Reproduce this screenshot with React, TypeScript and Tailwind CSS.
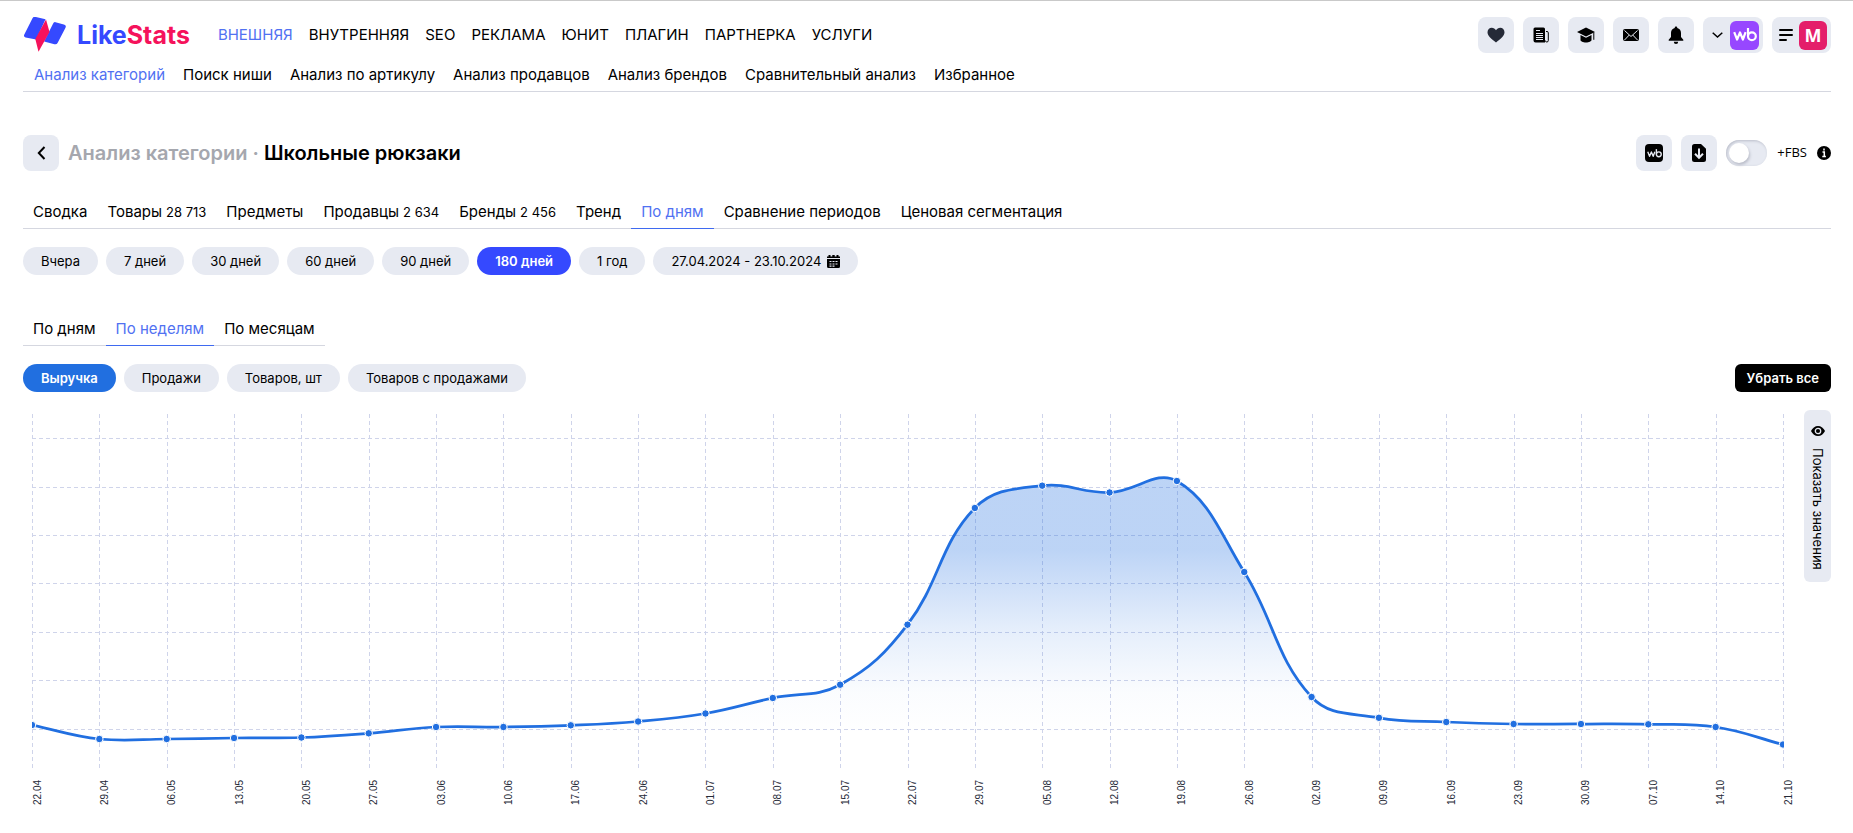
import { useId, useState } from "react";
import type { ReactNode } from "react";

const MAIN_NAV = [
  "ВНЕШНЯЯ",
  "ВНУТРЕННЯЯ",
  "SEO",
  "РЕКЛАМА",
  "ЮНИТ",
  "ПЛАГИН",
  "ПАРТНЕРКА",
  "УСЛУГИ",
];

const SUB_NAV = [
  "Анализ категорий",
  "Поиск ниши",
  "Анализ по артикулу",
  "Анализ продавцов",
  "Анализ брендов",
  "Сравнительный анализ",
  "Избранное",
];

const TABS: { label: string; count?: string }[] = [
  { label: "Сводка" },
  { label: "Товары", count: "28 713" },
  { label: "Предметы" },
  { label: "Продавцы", count: "2 634" },
  { label: "Бренды", count: "2 456" },
  { label: "Тренд" },
  { label: "По дням" },
  { label: "Сравнение периодов" },
  { label: "Ценовая сегментация" },
];

const PERIODS = ["Вчера", "7 дней", "30 дней", "60 дней", "90 дней", "180 дней", "1 год"];
const GROUPING = ["По дням", "По неделям", "По месяцам"];
const METRICS = ["Выручка", "Продажи", "Товаров, шт", "Товаров с продажами"];

// [week start, y inside the 357px plot]
const WEEKS: [string, number][] = [
  ["22.04", 311],
  ["29.04", 325],
  ["06.05", 325],
  ["13.05", 324],
  ["20.05", 323.5],
  ["27.05", 319.3],
  ["03.06", 313],
  ["10.06", 313],
  ["17.06", 311.3],
  ["24.06", 307.5],
  ["01.07", 299.5],
  ["08.07", 284],
  ["15.07", 270.7],
  ["22.07", 210.7],
  ["29.07", 94],
  ["05.08", 71.7],
  ["12.08", 78.5],
  ["19.08", 67],
  ["26.08", 158],
  ["02.09", 283],
  ["09.09", 303.8],
  ["16.09", 308],
  ["23.09", 310],
  ["30.09", 310],
  ["07.10", 310.3],
  ["14.10", 313],
  ["21.10", 330.5],
];

const PLOT_W = 1752;
const PLOT_H = 357;
const TENSION = 0.4;
const GRID_ROWS = [24, 73, 121, 169, 218, 266, 315];

const POINTS = WEEKS.map(([, y], i) => ({ x: (i * (PLOT_W - 1)) / (WEEKS.length - 1), y }));

function buildLine() {
  const controls = POINTS.map((p, i) => {
    const prev = POINTS[i - 1] ?? p;
    const next = POINTS[i + 1] ?? p;
    const d01 = Math.hypot(p.x - prev.x, p.y - prev.y);
    const d12 = Math.hypot(next.x - p.x, next.y - p.y);
    const fa = (TENSION * d01) / (d01 + d12);
    const fb = (TENSION * d12) / (d01 + d12);
    return {
      inX: p.x - fa * (next.x - prev.x),
      inY: p.y - fa * (next.y - prev.y),
      outX: p.x + fb * (next.x - prev.x),
      outY: p.y + fb * (next.y - prev.y),
    };
  });
  return POINTS.map((p, i) => {
    if (i === 0) return `M${p.x} ${p.y}`;
    const a = controls[i - 1];
    const b = controls[i];
    return `C${a.outX} ${a.outY} ${b.inX} ${b.inY} ${p.x} ${p.y}`;
  }).join(" ");
}

const LINE = buildLine();

function Logo() {
  return (
    <a href="#" className="flex items-center gap-2.5">
      <svg width="44" height="36" viewBox="0 1 44 36" aria-hidden="true">
        <path d="M12 .8 22.500 3.200 13.200 23.600 2.600 21.500Q.2 20.800 1.300 18.500L9.500 2.300Q10.400.5 12 .8Z" fill="#3549ff" />
        <path d="m32.500 6.200 8.300 2.400q2.900.7 1.700 3.200l-7.800 14.900q-1 2.100-3.300 1.500l-10.300-2.800 8.800-17.300q.9-2.400 2.600-1.900Z" fill="#3549ff" />
        <path d="m23 3.500 3.500 12.500L15.500 35.800 12.300 23Z" fill="#f5125b" />
      </svg>
      <span className="text-[25px] leading-8 font-bold">
        <span className="text-[#3549ff]">Like</span>
        <span className="text-[#f5125b]">Stats</span>
      </span>
    </a>
  );
}

function IconButton({ label, children }: { label: string; children: ReactNode }) {
  return (
    <button
      type="button"
      aria-label={label}
      className="flex size-9 shrink-0 items-center justify-center rounded-lg bg-[#e7eaf2]"
    >
      {children}
    </button>
  );
}

function WbMark({ className }: { className: string }) {
  return (
    <svg viewBox="0 0 24 14" fill="none" stroke="currentColor" strokeWidth="2.200" className={className} aria-hidden="true">
      <path d="m1.200 4.200 2.900 7.300L7 4.500l2.900 7 2.700-7.300" strokeLinejoin="round" />
      <path d="M15 0v8.300" />
      <circle cx="18.900" cy="8.300" r="3.900" />
    </svg>
  );
}

function UnderlineTabs({
  items,
  active,
  onSelect,
}: {
  items: { label: string; count?: string }[];
  active: string;
  onSelect: (label: string) => void;
}) {
  return (
    <div role="tablist" className="flex border-b border-[#d5d7e0]">
      {items.map((item) => (
        <button
          key={item.label}
          type="button"
          role="tab"
          aria-selected={item.label === active}
          onClick={() => onSelect(item.label)}
          className={[
            "-mb-px flex h-8 items-center gap-1 border-b px-2.5 pb-0.5 text-[15px] leading-5",
            item.label === active ? "border-[#3f6af0] text-[#5171f2]" : "border-transparent",
          ].join(" ")}
        >
          {item.label}
          {item.count ? <span className="text-[13px]">{item.count}</span> : null}
        </button>
      ))}
    </div>
  );
}

function Chip({
  active = false,
  activeClass = "bg-[#3549ff]",
  onClick,
  children,
}: {
  active?: boolean;
  activeClass?: string;
  onClick?: () => void;
  children: ReactNode;
}) {
  return (
    <button
      type="button"
      aria-pressed={active}
      onClick={onClick}
      className={[
        "flex items-center gap-1.5 rounded-full px-[18px] py-1 text-[13px] leading-5",
        active ? `${activeClass} font-semibold text-white` : "bg-[#e7eaf2]",
      ].join(" ")}
    >
      {children}
    </button>
  );
}

function Header() {
  return (
    <header className="border-b border-[#d5d7e0]">
      <div className="flex items-center justify-between pt-4">
        <div className="flex items-center gap-7">
          <Logo />
          <nav aria-label="Разделы" className="flex gap-4 text-[15px] leading-5">
            {MAIN_NAV.map((label, i) => (
              <a key={label} href="#" className={i === 0 ? "text-[#5171f2]" : ""}>
                {label}
              </a>
            ))}
          </nav>
        </div>

        <div className="flex gap-[9px]">
          <IconButton label="Избранное">
            <svg width="18" height="16" viewBox="0 0 18 16" fill="#252a37">
              <path d="M9 15.500C4 11.800.5 8.800.5 5.300.5 2.500 2.400.7 4.700.7 6.600.7 8 1.700 9 3.200 10 1.700 11.400.7 13.300.7c2.300 0 4.200 1.800 4.200 4.600 0 3.500-3.500 6.500-8.500 10.200Z" />
            </svg>
          </IconButton>
          <IconButton label="Новости">
            <svg width="16" height="16" viewBox="0 0 16 16">
              <path d="M2 .5h8.500a1.500 1.500 0 0 1 1.500 1.500v13.500H2.500a2 2 0 0 1-2-2V2A1.500 1.500 0 0 1 2 .5Z" />
              <path d="M13 4.500h1a1.300 1.300 0 0 1 1.300 1.300v7.700a1.500 1.500 0 0 1-3 0" fill="none" stroke="#000" />
              <path d="M3 3.500h4M3 6.500h7M3 8.500h7M3 10.500h7M3 12.500h7" stroke="#e7eaf2" />
            </svg>
          </IconButton>
          <IconButton label="Обучение">
            <svg width="18" height="16" viewBox="0 0 18 16">
              <path d="M9 .5 0 5l9 4.500L18 5Z" />
              <path d="M3.500 8v5c0 1.300 2.500 2.500 5.500 2.500s5.500-1.200 5.500-2.500V8L9 10.800Z" />
              <path d="M16.800 5.500v7.300" stroke="#000" />
            </svg>
          </IconButton>
          <IconButton label="Сообщения">
            <svg width="16" height="12" viewBox="0 0 16 12">
              <rect width="16" height="12" rx="2" />
              <path d="m1.500 1.500 6.500 6 6.500-6M1.500 11l4.800-5M14.500 11 9.700 6" fill="none" stroke="#e7eaf2" />
            </svg>
          </IconButton>
          <IconButton label="Уведомления">
            <svg width="16" height="18" viewBox="0 0 16 18">
              <path d="M8 .5a1.300 1.300 0 0 1 1.300 1.400C11.700 2.500 13 4.500 13 7v4l2.300 2.800v1H.7v-1L3 11V7c0-2.500 1.300-4.500 3.700-5.100A1.300 1.300 0 0 1 8 .5ZM5.800 15.700h4.400a2.200 2.200 0 0 1-4.400 0Z" />
            </svg>
          </IconButton>
          <button type="button" aria-label="Маркетплейс" className="flex h-9 items-center gap-[7px] rounded-lg bg-[#e7eaf2] pr-1 pl-[9px]">
            <svg width="11" height="6" viewBox="0 0 11 6" fill="none" stroke="#000" strokeWidth="1.500">
              <path d="m.7.700 4.800 4.300L10.300.700" />
            </svg>
            <span className="flex size-[29px] items-center justify-center rounded-md bg-[#9747ff] text-white">
              <WbMark className="h-[14px] w-6" />
            </span>
          </button>
          <button type="button" aria-label="Профиль" className="flex h-9 items-center gap-1.5 rounded-lg bg-[#e7eaf2] pr-1 pl-[7px]">
            <svg width="14" height="12" viewBox="0 0 14 12" stroke="#000" strokeWidth="2" strokeLinecap="round">
              <path d="M1 1h12M1 6h12M1 11h6" />
            </svg>
            <span className="flex h-[29px] w-7 items-center justify-center rounded-md bg-[#e41e6a] font-['Open_Sans',sans-serif] text-lg font-bold text-white">
              M
            </span>
          </button>
        </div>
      </div>

      <nav aria-label="Аналитика" className="flex gap-[18px] px-[11px] pt-3 pb-1.5 text-[15px] leading-5">
        {SUB_NAV.map((label, i) => (
          <a key={label} href="#" className={i === 0 ? "text-[#5171f2]" : ""}>
            {label}
          </a>
        ))}
      </nav>
    </header>
  );
}

function TitleRow() {
  const fbsId = useId();
  return (
    <div className="mt-[43px] flex items-center justify-between">
      <div className="flex items-center gap-[9px]">
        <IconButton label="Назад">
          <svg width="9" height="14" viewBox="0 0 9 14" fill="none" stroke="#000" strokeWidth="2">
            <path d="M7.500 1 1.800 7l5.700 6" />
          </svg>
        </IconButton>
        <h1 className="text-xl font-semibold">
          <span className="text-[#a5a7ae]">Анализ категории · </span>Школьные рюкзаки
        </h1>
      </div>
      <div className="flex items-center gap-[9px]">
        <IconButton label="Открыть на Wildberries">
          <span className="flex size-[18px] items-center justify-center rounded bg-black text-[#e7eaf2]">
            <WbMark className="h-[9px] w-[15px]" />
          </span>
        </IconButton>
        <IconButton label="Скачать">
          <svg width="14" height="18" viewBox="0 0 14 18">
            <path d="M2.500 0H9l5 4.800V15.500a2.500 2.500 0 0 1-2.500 2.500h-9A2.500 2.500 0 0 1 0 15.500v-13A2.500 2.500 0 0 1 2.500 0Z" />
            <path d="M7 4.500v9M3 9.800l4 4 4-4" fill="none" stroke="#e7eaf2" strokeWidth="2" />
          </svg>
        </IconButton>
        <div className="flex items-center gap-2.5">
          <input
            id={fbsId}
            type="checkbox"
            role="switch"
            className="h-[26px] w-[41px] appearance-none rounded-full bg-[#e7eaf2] shadow-[inset_1px_1px_3px_#b9bcc8] before:m-[3px] before:block before:size-5 before:rounded-full before:bg-white before:shadow-[1px_2px_3px_#b9bcc8] checked:before:translate-x-[15px]"
          />
          <label htmlFor={fbsId} className="font-['Open_Sans',sans-serif] text-[13px]">
            +FBS
          </label>
          <svg width="14" height="14" viewBox="0 0 14 14" aria-hidden="true">
            <circle cx="7" cy="7" r="7" />
            <path d="M7 2.500v2M5.500 6h1.800v4.500M5.300 10.500h3.600" stroke="#fff" strokeWidth="1.500" fill="none" />
          </svg>
        </div>
      </div>
    </div>
  );
}

function RevenueChart() {
  return (
    <svg
      viewBox={`0 0 ${PLOT_W + 12} 396`}
      className="block w-full"
      role="img"
      aria-label="Выручка по неделям"
    >
      <defs>
        <linearGradient id="fill" gradientUnits="userSpaceOnUse" x1="0" y1="0" x2="0" y2={PLOT_H}>
          <stop offset="0" stopColor="#216fe0" stopOpacity="0.3" />
          <stop offset="0.38" stopColor="#216fe0" stopOpacity="0.3" />
          <stop offset="0.6" stopColor="#216fe0" stopOpacity="0.12" />
          <stop offset="0.78" stopColor="#216fe0" stopOpacity="0.02" />
          <stop offset="0.9" stopColor="#216fe0" stopOpacity="0" />
        </linearGradient>
        <clipPath id="plot">
          <rect width={PLOT_W} height={PLOT_H} />
        </clipPath>
      </defs>

      <g stroke="#cfd4ea" strokeDasharray="4 3" shapeRendering="crispEdges">
        {GRID_ROWS.map((y) => (
          <line key={y} x1="0" x2={PLOT_W} y1={y + 0.5} y2={y + 0.5} />
        ))}
        {POINTS.map((p) => (
          <line key={p.x} x1={Math.round(p.x) + 0.5} x2={Math.round(p.x) + 0.5} y1="0" y2={PLOT_H} />
        ))}
      </g>

      <g clipPath="url(#plot)">
        <path d={`${LINE} V${PLOT_H} H0 Z`} fill="url(#fill)" />
        <path d={LINE} fill="none" stroke="#216fe0" strokeWidth="2.750" />
        {POINTS.map((p) => (
          <circle key={p.x} cx={p.x} cy={p.y} r="3.750" fill="#216fe0" stroke="#fff" />
        ))}
      </g>

      {WEEKS.map(([label], i) => (
        <text
          key={label}
          transform={`translate(${POINTS[i].x + 8.5} 391) rotate(-90)`}
          fill="#252a37"
          className="font-['Liberation_Sans',sans-serif] text-[10px]"
        >
          {label}
        </text>
      ))}
    </svg>
  );
}

export default function App() {
  const [tab, setTab] = useState("По дням");
  const [period, setPeriod] = useState("180 дней");
  const [grouping, setGrouping] = useState("По неделям");
  const [metric, setMetric] = useState("Выручка");

  return (
    <div className="min-h-screen border-t border-[#c9c9c9] bg-white pr-[22px] pl-[23px] font-['Inter',sans-serif] text-black">
      <Header />
      <main>
        <TitleRow />

        <div className="mt-[26px]">
          <UnderlineTabs items={TABS} active={tab} onSelect={setTab} />
        </div>
        <div className="mt-[18px] flex gap-2">
          {PERIODS.map((label) => (
            <Chip key={label} active={label === period} onClick={() => setPeriod(label)}>
              {label}
            </Chip>
          ))}
          <Chip>
            27.04.2024 - 23.10.2024
            <svg width="13" height="13" viewBox="0 0 13 13" aria-hidden="true">
              <path d="M1.500 0h2v1.500h1.800V0h2.400v1.500h1.800V0h2v1.500H13V3H0V1.500h1.500ZM0 4h13v7.500a1.500 1.500 0 0 1-1.500 1.500h-10A1.500 1.500 0 0 1 0 11.500Z" />
              <path d="M2.500 6.500h2M5.500 6.500h2M8.500 6.500h2M2.500 9h2M5.500 9h2M8.500 9h2M2.500 11.200h2M5.500 11.200h2" stroke="#e7eaf2" strokeWidth="1.200" />
            </svg>
          </Chip>
        </div>

        <div className="mt-[39px] flex">
          <UnderlineTabs
            items={GROUPING.map((label) => ({ label }))}
            active={grouping}
            onSelect={setGrouping}
          />
        </div>
        <div className="mt-[18px] flex items-center justify-between">
          <div className="flex gap-2">
            {METRICS.map((label) => (
              <Chip
                key={label}
                active={label === metric}
                activeClass="bg-[#216fe0]"
                onClick={() => setMetric(label)}
              >
                {label}
              </Chip>
            ))}
          </div>
          <button type="button" className="rounded-md bg-black px-3 py-1 text-[13px] leading-5 font-semibold text-white">
            Убрать все
          </button>
        </div>

        <div className="mt-[18px] flex items-start gap-2">
          <div className="min-w-0 flex-1 pt-1 pl-[9px]">
            <RevenueChart />
          </div>
          <button
            type="button"
            className="flex w-[27px] shrink-0 flex-col items-center gap-3 rounded-md bg-[#e7eaf2] pt-4 pb-3 text-[13px] leading-5"
          >
            <svg width="14" height="10" viewBox="0 0 14 10" aria-hidden="true">
              <path d="M7 0c3 0 5.500 2 7 5-1.500 3-4 5-7 5S1.500 8 0 5c1.500-3 4-5 7-5Z" />
              <circle cx="7" cy="5" r="2.700" fill="none" stroke="#e7eaf2" strokeWidth="1.300" />
            </svg>
            <span className="[writing-mode:vertical-rl]">Показать значения</span>
          </button>
        </div>
      </main>
    </div>
  );
}
